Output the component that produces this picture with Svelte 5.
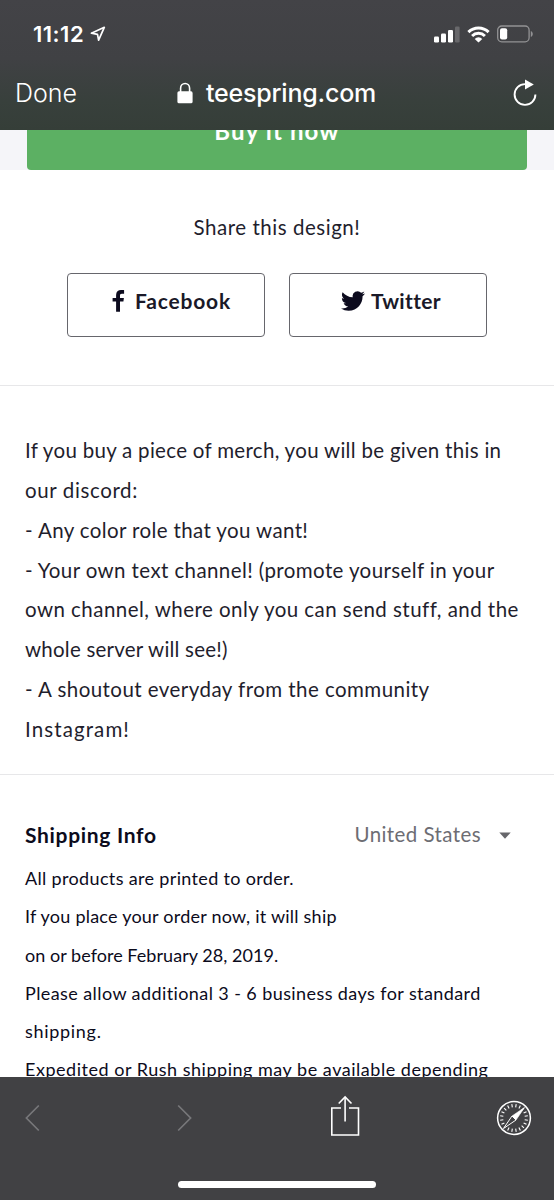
<script>
	// text of each line with its letter spacing in px
	const description = [
		['If you buy a piece of merch, you will be given this in', 0.3],
		['our discord:', 0.62],
		['- Any color role that you want!', 0.38],
		['- Your own text channel! (promote yourself in your', 0.4],
		['own channel, where only you can send stuff, and the', 0.46],
		['whole server will see!)', 0.22],
		['- A shoutout everyday from the community', 0.45],
		['Instagram!', 1.1]
	];

	const shipping = [
		['All products are printed to order.', 0.34],
		['If you place your order now, it will ship', 0.23],
		['on or before February 28, 2019.', 0.04],
		['Please allow additional 3 - 6 business days for standard', 0.41],
		['shipping.', 0.7],
		['Expedited or Rush shipping may be available depending', 0.52]
	];

	const ticks = [];
	for (let i = 0; i < 20; i++) {
		ticks.push(i * 18 + 9);
	}
</script>

<div class="phone">
	<header>
		<div class="status">
			<span class="time">11:12</span>
			<svg class="location" width="16" height="16" viewBox="0 0 16 16">
				<path d="M1.4 7.2 14.3 1.3 8.6 14.2 7.5 8.4Z" fill="none" stroke="#fff" stroke-width="1.7" stroke-linejoin="round" />
			</svg>
			<svg class="signal" width="26" height="17" viewBox="0 0 26 17">
				<rect x="0" y="10.5" width="5" height="6" rx="1.2" fill="#fff" />
				<rect x="7" y="7.5" width="5" height="9" rx="1.2" fill="#fff" />
				<rect x="14" y="4" width="5" height="12.5" rx="1.2" fill="#fff" />
				<rect x="21" y="0.5" width="4.6" height="16" rx="1.2" fill="#68686b" />
			</svg>
			<svg class="wifi" width="23" height="17" viewBox="0 0 23 17">
				<g fill="none" stroke="#fff" stroke-width="3">
					<path d="M1.4 6.1a14.4 14.4 0 0 1 20.2 0" />
					<path d="M5.1 10a9.1 9.1 0 0 1 12.8 0" />
				</g>
				<path d="M11.5 16.6 7.7 12.9a5.4 5.4 0 0 1 7.6 0Z" fill="#fff" />
			</svg>
			<svg class="battery" width="37" height="18" viewBox="0 0 37 18">
				<rect x="0.7" y="1" width="31.4" height="15.8" rx="4" fill="none" stroke="#929294" stroke-width="1.3" />
				<rect x="3" y="3.3" width="7.2" height="11.2" rx="2" fill="#fff" />
				<path d="M33.8 6c2.6 1 2.6 5 0 6Z" fill="#929294" />
			</svg>
		</div>
		<div class="bar">
			<span class="done">Done</span>
			<div class="site">
				<svg width="16" height="22" viewBox="0 0 16 22">
					<path d="M3.6 10V6.2a4.5 4.7 0 0 1 9 0V10" fill="none" stroke="#fff" stroke-width="1.6" />
					<rect x="0.4" y="9.3" width="15.2" height="12" rx="1.6" fill="#fff" />
				</svg>
				<span>teespring.com</span>
			</div>
			<svg class="reload" width="24" height="28" viewBox="0 0 24 28">
				<path d="M12 5.1A10.4 10.4 0 1 0 22.4 15.5" fill="none" stroke="#fff" stroke-width="1.9" />
				<path d="M12 0.5v10l8.8-5Z" fill="#fff" />
			</svg>
		</div>
	</header>

	<main>
		<div class="buy-row">
			<button class="buy"><span>Buy it now</span></button>
		</div>

		<section class="share">
			<p>Share this design!</p>
			<div class="buttons">
				<button>
					<svg width="13" height="22" viewBox="0 0 13 22">
						<path d="M12.1.2v3.5H9.9C8.4 3.7 8 4.4 8 5.5v2.4h3.9l-.5 3.7H8v10.1H4.1V11.6H.6V7.9h3.5V5C4.1 1.8 6.1.1 9.1.1c1.4 0 2.6.1 3 .1Z" fill="#0c0b1e" />
					</svg>
					<span class="fb">Facebook</span>
				</button>
				<button>
					<svg width="24" height="20" viewBox="0 2 24 20">
						<path d="M23.953 4.57a10 10 0 01-2.825.775 4.958 4.958 0 002.163-2.723c-.951.555-2.005.959-3.127 1.184a4.92 4.92 0 00-8.384 4.482C7.69 8.095 4.067 6.13 1.64 3.162a4.822 4.822 0 00-.666 2.475c0 1.71.87 3.213 2.188 4.096a4.904 4.904 0 01-2.228-.616v.06a4.923 4.923 0 003.946 4.827 4.996 4.996 0 01-2.212.085 4.936 4.936 0 004.604 3.417 9.867 9.867 0 01-6.102 2.105c-.39 0-.779-.023-1.17-.067a13.995 13.995 0 007.557 2.209c9.053 0 13.998-7.496 13.998-13.985 0-.21 0-.42-.015-.63A9.935 9.935 0 0024 4.59z" fill="#0c0b1e" />
					</svg>
					<span class="tw">Twitter</span>
				</button>
			</div>
		</section>

		<section class="description">
			{#each description as [text, spacing]}
				<div style="letter-spacing: {spacing}px">{text}</div>
			{/each}
		</section>

		<section class="shipping">
			<div class="heading">
				<h2>Shipping Info</h2>
				<div class="country">
					<span>United States</span>
					<svg width="12" height="7" viewBox="0 0 12 7"><path d="M0.3 0.5h11.4L6 6.7Z" fill="#66666b" /></svg>
				</div>
			</div>
			{#each shipping as [text, spacing]}
				<div class="line" style="letter-spacing: {spacing}px">{text}</div>
			{/each}
		</section>
	</main>

	<footer>
		<div class="tools">
			<svg class="back" width="15" height="28" viewBox="0 0 15 28"><path d="M13.8 1.5 1.4 14l12.4 12.5" /></svg>
			<svg class="forward" width="15" height="28" viewBox="0 0 15 28"><path d="M1.2 1.5 13.6 14 1.2 26.5" /></svg>
			<svg class="export" width="30" height="42" viewBox="0 0 30 42">
				<g fill="none" stroke="#fff" stroke-width="1.6">
					<path d="M11 13H1.8v27h26.7V13H19" />
					<path d="M15.1 26.5V2" />
					<path d="M8.7 8.5 15.1 2l6.4 6.5" />
				</g>
			</svg>
			<svg class="compass" width="36" height="36" viewBox="0 0 36 36">
				<circle cx="18" cy="18" r="16.4" fill="none" stroke="#fff" stroke-width="1.5" />
				{#each ticks as angle}
					<path d="M18 4v3.2" stroke="#fff" stroke-width="1.1" transform="rotate({angle} 18 18)" />
				{/each}
				<path d="M28.5 7.5 20 20 16 16Z" fill="#fff" stroke="#fff" stroke-width="0.6" />
				<path d="M7.5 28.5 16 16 20 20Z" fill="#414144" stroke="#fff" stroke-width="1" />
			</svg>
		</div>
		<div class="home"></div>
	</footer>
</div>

<style>
	:global(body) {
		background: #fff;
	}

	.phone {
		display: flex;
		flex-direction: column;
		width: 554px;
		height: 1200px;
		overflow: hidden;
		font-family: Lato, sans-serif;
		color: #1f1e2d;
	}

	svg {
		display: block;
		flex: none;
	}

	header {
		flex: none;
		height: 130px;
		background: linear-gradient(#434347 0%, #404144 45%, #38403c 78%, #353e38 100%);
		color: #fff;
		font-family: Inter, sans-serif;
	}

	.status {
		display: flex;
		align-items: center;
		height: 68px;
		padding: 0 20px 0 33px;
		box-sizing: border-box;
	}

	.time {
		font-size: 22px;
		font-weight: 600;
		letter-spacing: 0.5px;
	}

	.location {
		margin-left: 6px;
	}

	.signal {
		margin-left: auto;
	}

	.wifi,
	.battery {
		margin-left: 7px;
	}

	.bar {
		display: flex;
		align-items: center;
		height: 50px;
		padding: 0 17px 0 15px;
	}

	.done {
		width: 162px;
		font-size: 25px;
		font-weight: 300;
	}

	.site {
		display: flex;
		align-items: center;
		gap: 13px;
		font-size: 25px;
		font-weight: 500;
		letter-spacing: -0.2px;
	}

	.reload {
		margin-left: auto;
	}

	main {
		flex: 1;
		min-height: 0;
		overflow: hidden;
	}

	.buy-row {
		height: 40px;
		padding: 0 27px;
		background: #f5f5f9;
		overflow: hidden;
	}

	button {
		font-family: inherit;
		color: inherit;
	}

	.buy {
		display: block;
		width: 100%;
		height: 74px;
		margin-top: -34px;
		padding: 0 0 6px;
		border: 0;
		border-radius: 4px;
		background: #5cb063;
		color: #fff;
		font-size: 24px;
		font-weight: 700;
		letter-spacing: 1.1px;
	}

	.share {
		height: 178px;
		padding-top: 37px;
		border-bottom: 1px solid #e7e7e9;
	}

	.share p {
		margin: 0;
		font-size: 20.5px;
		line-height: 40px;
		letter-spacing: 0.53px;
		text-align: center;
	}

	.buttons {
		display: flex;
		justify-content: center;
		gap: 24px;
		margin-top: 26px;
	}

	.buttons button {
		display: flex;
		align-items: center;
		justify-content: center;
		width: 198px;
		height: 64px;
		padding: 0 0 9px;
		border: 1px solid #66666c;
		border-radius: 4px;
		background: #fff;
		color: #1a1928;
		font-size: 21px;
		font-weight: 700;
	}

	.fb {
		margin-left: 10px;
		letter-spacing: 0.8px;
	}

	.tw {
		margin-left: 6px;
		letter-spacing: 0.33px;
	}

	.buttons button:first-child {
		padding-left: 11px;
	}

	.buttons button:last-child {
		padding-left: 6px;
	}

	.description {
		height: 343.2px;
		padding: 44.8px 0 0 25px;
		border-bottom: 1px solid #e7e7e9;
		font-size: 20.5px;
		line-height: 39.9px;
		white-space: nowrap;
	}

	.shipping {
		padding: 40px 43px 0 25px;
		color: #0c0b1c;
		white-space: nowrap;
	}

	.heading {
		display: flex;
		justify-content: space-between;
		height: 44px;
	}

	h2 {
		margin: 0;
		font-size: 21px;
		font-weight: 700;
		line-height: 40px;
		letter-spacing: 0.68px;
	}

	.country {
		display: flex;
		align-items: center;
		gap: 18px;
		height: 38px;
		color: #6d6d73;
		font-size: 20.5px;
		letter-spacing: 0.42px;
	}

	.country svg {
		margin-top: 3px;
	}

	.line {
		font-size: 18px;
		line-height: 38.3px;
	}

	footer {
		flex: none;
		height: 123px;
		background: #414144;
	}

	.tools {
		display: flex;
		align-items: center;
		height: 82px;
		padding: 0 22px 0 25px;
	}

	.back,
	.forward {
		fill: none;
		stroke: #77777a;
		stroke-width: 1.7;
	}

	.forward {
		margin-left: 137px;
	}

	.export {
		margin: 0 0 4px 138px;
	}

	.compass {
		margin-left: auto;
	}

	.home {
		width: 198px;
		height: 7px;
		margin: 22px auto 0;
		border-radius: 4px;
		background: #fff;
	}
</style>
